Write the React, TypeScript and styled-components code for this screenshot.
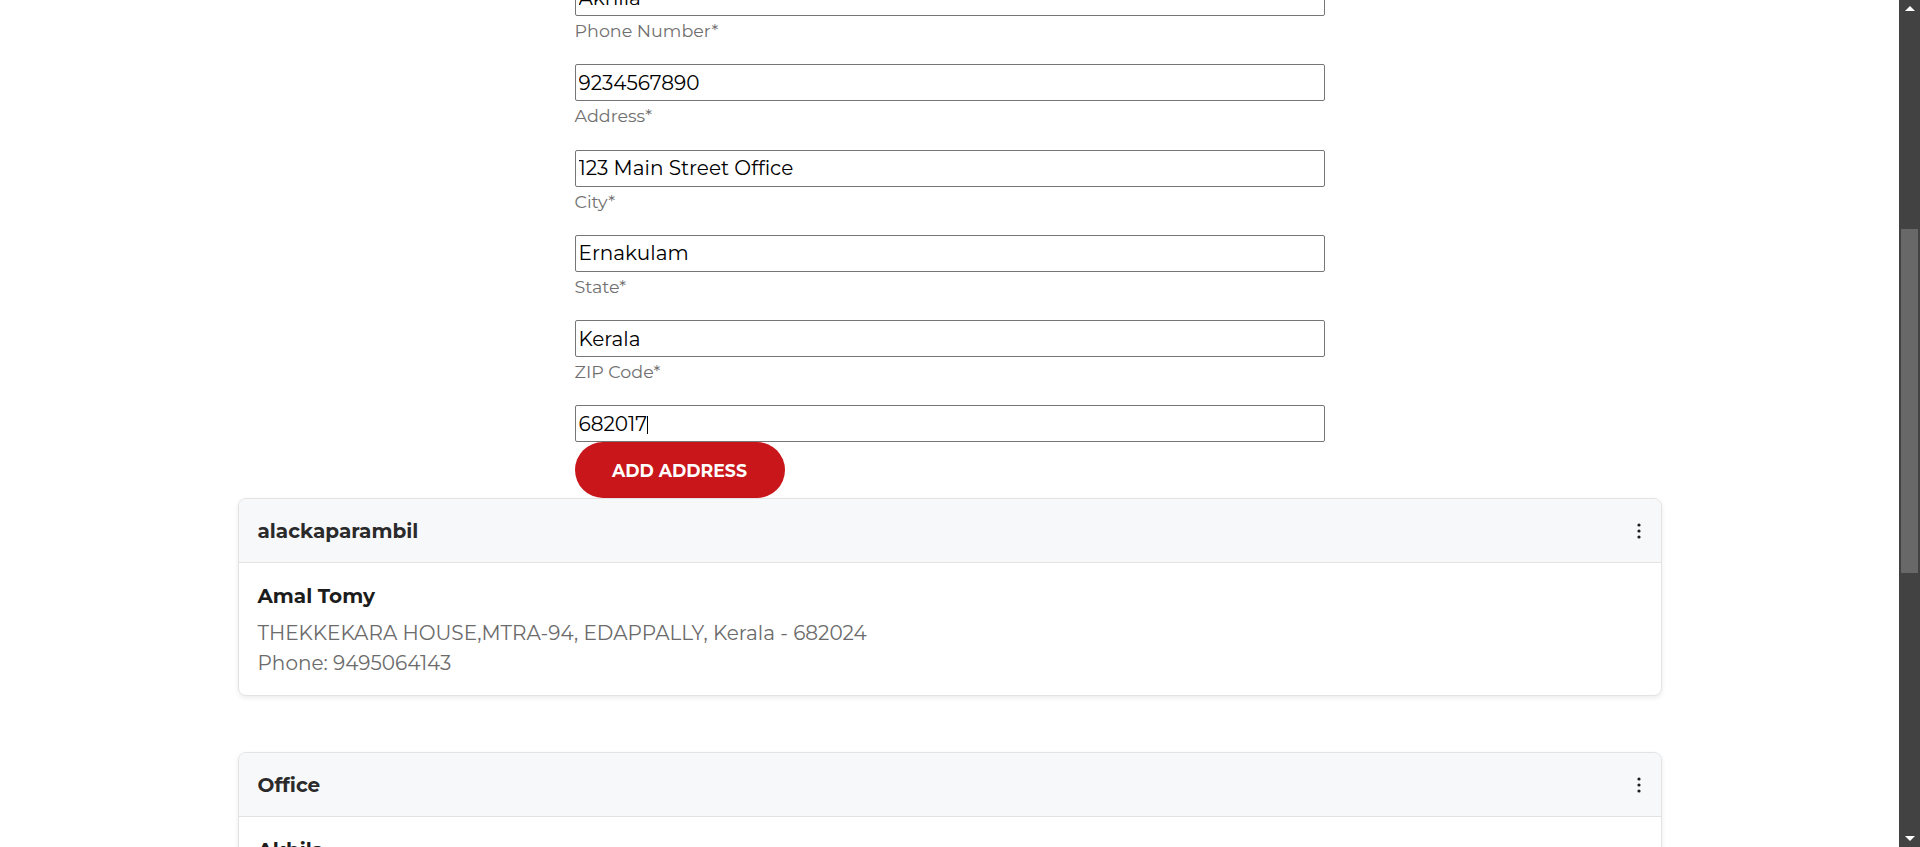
import React from "react";
import styled, { createGlobalStyle } from "styled-components";

const GlobalStyle = createGlobalStyle`
  html, body {
    margin: 0;
    padding: 0;
    background: #ffffff;
    overflow: hidden;
  }
  body {
    font-family: Montserrat, Inter, "Noto Sans", sans-serif;
  }
  * { box-sizing: border-box; }
`;

const Page = styled.div`
  display: flex;
  height: 100vh;
  width: 100vw;
`;

const Viewport = styled.main`
  flex: 1;
  min-width: 0;
  overflow: hidden;
`;

const Scrolled = styled.div`
  margin-top: -21px;
`;

const Form = styled.form`
  width: 750px;
  margin: 0 auto;
  display: flex;
  flex-direction: column;
`;

const FieldGroup = styled.div`
  display: flex;
  flex-direction: column;
`;

const FieldLabel = styled.label`
  font-size: 17.5px;
  line-height: 29.25px;
  color: #707070;
  margin-bottom: 19px;
`;

const InputWrap = styled.div`
  position: relative;
`;

const TextInput = styled.input`
  display: block;
  height: 37px;
  width: 100%;
  border: 1px solid #767676;
  border-radius: 2px;
  padding: 1px 3px;
  font-family: inherit;
  font-size: 20px;
  color: #000;
  background: #fff;
  &:focus { outline: none; }
`;

const Caret = styled.span<{ $left: number }>`
  position: absolute;
  left: ${(p) => p.$left}px;
  top: 11px;
  width: 1px;
  height: 18px;
  background: #000;
  pointer-events: none;
`;

const SubmitButton = styled.button`
  align-self: flex-start;
  width: 210px;
  height: 56px;
  border: none;
  border-radius: 28px;
  background: #c9161b;
  color: #fff;
  font-family: inherit;
  font-size: 17.3px;
  font-weight: 700;
  cursor: pointer;
`;

const CardList = styled.div`
  width: 1424px;
  margin: 0 auto;
  display: flex;
  flex-direction: column;
  gap: 56px;
`;

const Card = styled.section`
  border: 1px solid #e3e3e3;
  border-radius: 8px;
  background: #fff;
  box-shadow: 0 2px 5px rgba(0, 0, 0, 0.08);
  overflow: hidden;
`;

const CardHeader = styled.header`
  height: 64px;
  display: flex;
  align-items: center;
  justify-content: space-between;
  padding: 0 12px 0 19px;
  background: #f7f8fa;
  border-bottom: 1px solid #e2e2e2;
`;

const CardTitle = styled.h3`
  margin: 0;
  font-size: 20px;
  font-weight: 700;
  color: #2a2a2a;
`;

const KebabButton = styled.button`
  width: 20px;
  height: 32px;
  padding: 0;
  border: none;
  background: transparent;
  display: flex;
  align-items: center;
  justify-content: center;
  color: #1e1e1e;
  cursor: pointer;
`;

const CardBody = styled.div`
  padding: 18.5px 19px 17.5px;
`;

const PersonName = styled.div`
  font-size: 20px;
  line-height: 28px;
  font-weight: 700;
  color: #1c1c1c;
  margin-bottom: 8px;
`;

const DetailLine = styled.div`
  font-size: 20px;
  line-height: 30px;
  color: #6b6b6b;
`;

const ScrollTrack = styled.div`
  width: 21px;
  flex: 0 0 21px;
  background: #424242;
  display: flex;
  flex-direction: column;
  align-items: center;
`;

const ArrowCell = styled.div`
  height: 17px;
  width: 100%;
  display: flex;
  align-items: center;
  justify-content: center;
`;

const ArrowUp = styled.div`
  width: 0;
  height: 0;
  border-left: 5px solid transparent;
  border-right: 5px solid transparent;
  border-bottom: 5px solid #ffffff;
`;

const ArrowDown = styled.div`
  width: 0;
  height: 0;
  border-left: 5px solid transparent;
  border-right: 5px solid transparent;
  border-top: 5px solid #ffffff;
`;

const TrackGap = styled.div<{ $h?: number }>`
  flex: ${(p) => (p.$h ? `0 0 ${p.$h}px` : "1")};
`;

const Thumb = styled.div`
  width: 17px;
  height: 344px;
  background: #686868;
`;

const KebabIcon = () => (
  <svg width="4" height="16" viewBox="0 0 4 16" aria-hidden="true">
    <circle cx="2" cy="2" r="1.6" fill="currentColor" />
    <circle cx="2" cy="8" r="1.6" fill="currentColor" />
    <circle cx="2" cy="14" r="1.6" fill="currentColor" />
  </svg>
);

type Field = { label?: string; value: string; caretAt?: number };

const fields: Field[] = [
  { value: "Akhila" },
  { label: "Phone Number*", value: "9234567890" },
  { label: "Address*", value: "123 Main Street Office" },
  { label: "City*", value: "Ernakulam" },
  { label: "State*", value: "Kerala" },
  { label: "ZIP Code*", value: "682017", caretAt: 72 },
];

type Address = {
  title: string;
  name: string;
  line: string;
  phone: string;
};

const addresses: Address[] = [
  {
    title: "alackaparambil",
    name: "Amal Tomy",
    line: "THEKKEKARA HOUSE,MTRA-94, EDAPPALLY, Kerala - 682024",
    phone: "Phone: 9495064143",
  },
  {
    title: "Office",
    name: "Akhila",
    line: "123 Main Street Office, Ernakulam, Kerala - 682017",
    phone: "Phone: 9234567890",
  },
];

export default function App() {
  return (
    <>
      <GlobalStyle />
      <Page>
        <Viewport>
          <Scrolled>
            <Form onSubmit={(e) => e.preventDefault()}>
              {fields.map((f, i) => (
                <FieldGroup key={i}>
                  {f.label && <FieldLabel>{f.label}</FieldLabel>}
                  <InputWrap>
                    <TextInput defaultValue={f.value} />
                    {f.caretAt !== undefined && <Caret $left={f.caretAt} />}
                  </InputWrap>
                </FieldGroup>
              ))}
              <SubmitButton type="submit">ADD ADDRESS</SubmitButton>
            </Form>
            <CardList>
              {addresses.map((a) => (
                <Card key={a.title}>
                  <CardHeader>
                    <CardTitle>{a.title}</CardTitle>
                    <KebabButton aria-label="More options">
                      <KebabIcon />
                    </KebabButton>
                  </CardHeader>
                  <CardBody>
                    <PersonName>{a.name}</PersonName>
                    <DetailLine>{a.line}</DetailLine>
                    <DetailLine>{a.phone}</DetailLine>
                  </CardBody>
                </Card>
              ))}
            </CardList>
          </Scrolled>
        </Viewport>
        <ScrollTrack>
          <ArrowCell>
            <ArrowUp />
          </ArrowCell>
          <TrackGap $h={212} />
          <Thumb />
          <TrackGap />
          <ArrowCell>
            <ArrowDown />
          </ArrowCell>
        </ScrollTrack>
      </Page>
    </>
  );
}
